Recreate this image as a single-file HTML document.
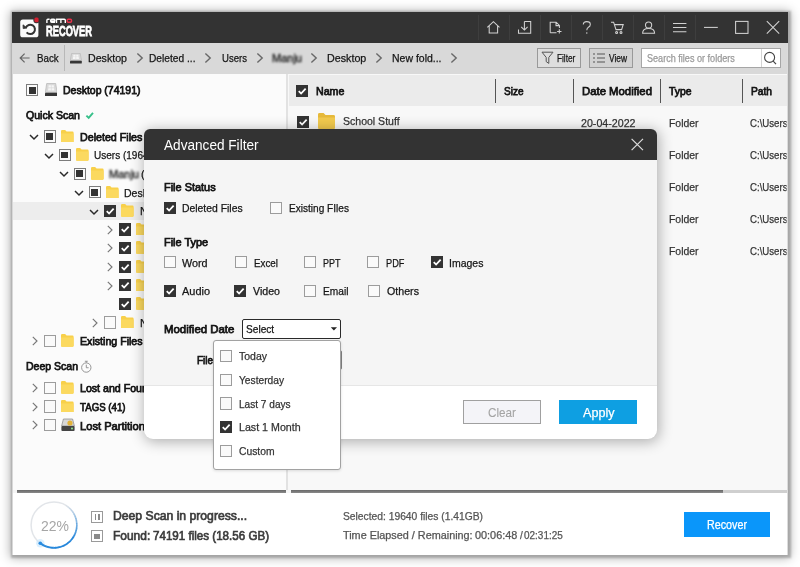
<!DOCTYPE html>
<html><head><meta charset="utf-8"><title>Remo Recover</title>
<style>
*{box-sizing:border-box;margin:0;padding:0}
html,body{width:800px;height:567px;overflow:hidden;background:#fff;font-family:"Liberation Sans",sans-serif;font-size:12px;color:#1a1a1a}
.abs{position:absolute}
.t{position:absolute;white-space:nowrap;-webkit-text-stroke:.25px}
.cb{position:absolute;width:12.3px;height:12.3px;border:1px solid #9c9c9c;background:#fafafa}
.cb.ind::after{content:"";position:absolute;left:1.8px;top:1.8px;width:6.7px;height:6.7px;background:#333}
.cb.chk{background:#333;border-color:#333}
.cb.ind{border-color:#7c7c7c}
.cb.chk svg{position:absolute;left:-1px;top:-1px}
</style></head><body>
<div class="abs" style="left:12.0px;top:12.0px;width:776.0px;height:543.0px;background:#f6f6f6;box-shadow:.7px .7px 2px 2px rgba(140,140,140,.6),0 1px 10px 2px rgba(0,0,0,.3)"></div>
<div class="abs" style="left:12.0px;top:12.0px;width:776.0px;height:30.5px;background:#333"></div>
<div class="abs" style="left:12.0px;top:42.5px;width:776.0px;height:31.0px;background:#d9d9d9"></div>
<div class="abs" style="left:12.0px;top:73.5px;width:275.0px;height:416.5px;background:#fbfbfb"></div>
<div class="abs" style="left:286.4px;top:74.0px;width:1.4px;height:416.0px;background:#e2e2e2"></div>
<div class="abs" style="left:287.8px;top:74.0px;width:1.2px;height:416.0px;background:#f8f8f8"></div>
<div class="abs" style="left:289.0px;top:74.0px;width:499.0px;height:416.0px;background:#f8f8f8"></div>
<div class="abs" style="left:289.0px;top:75.0px;width:499.0px;height:30.5px;background:#ebebeb"></div>
<div class="abs" style="left:12.0px;top:493.0px;width:776.0px;height:62.0px;background:#fff"></div>
<div class="abs" style="left:12.0px;top:42.5px;width:1.0px;height:512.5px;background:#d8d8d8"></div>
<div class="abs" style="left:786.5px;top:42.5px;width:1.5px;height:512.5px;background:#dcdcdc"></div>
<svg class="abs" style="left:14px;top:12px" width="90" height="30" viewBox="14 12 90 30">
<rect x="20.2" y="19.5" width="18.2" height="17.8" rx="2.6" fill="#fbfbfb"/>
<path d="M25.9 27.6 A4.7 4.7 0 1 1 26.6 32.4" fill="none" stroke="#333" stroke-width="2"/>
<path d="M23 24.8 L23.2 28.6 L27 28 Z" fill="#333" stroke="#333" stroke-width=".8"/>
<rect x="33.4" y="16.6" width="6.2" height="6.6" rx="2.4" fill="#333"/>
<rect x="34.4" y="17.5" width="4.2" height="4.8" rx="1.5" fill="#d41f30"/>
<g fill="none" stroke="#fff" stroke-width="1.4">
<path d="M46.9 22.9 V20.2 Q46.9 19.2 47.9 19.2 H49.6"/>
<path d="M55 22.3 H51.7 Q50.7 22.3 50.7 21.3 V20.2 Q50.7 19.2 51.7 19.2 H53.9 Q54.9 19.2 54.9 20.2 V20.9 H50.7"/>
<path d="M56.5 22.9 V19.2 H64.3 Q65.3 19.2 65.3 20.2 V22.9 M60.9 19.2 V22.9"/>
</g>
<rect x="67.2" y="19.2" width="4.3" height="3.1" rx="1" fill="none" stroke="#e8304a" stroke-width="1.45"/>
</svg>
<div class="t" style="left:46.2px;top:21.4px;font-size:15px;line-height:19px;color:#fff;font-weight:bold;transform:scaleX(0.620);transform-origin:0 0;-webkit-text-stroke:.8px #fff;">RECOVER</div>
<svg class="abs" style="left:470px;top:12px" width="320" height="31" viewBox="470 12 320 31">
<g stroke="#3e3e3e" stroke-width="1">
<path d="M478.5 15V40M509.5 15V40M540.5 15V40M571.5 15V40M602.5 15V40M633.5 15V40M664.5 15V40M695.5 15V40"/>
</g>
<g fill="none" stroke="#d2d2d2" stroke-width="1.05">
<path d="M487.3 27.4 L493.4 21.6 L499.5 27.4 M489.2 26 V33 H497.6 V26"/>
<path d="M524.4 21.5 H530.7 V33.3 H518.5 V29.4 M524.4 21.5 V29.6 M521.2 26.8 L524.4 30 L527.6 26.8"/>
<path d="M550.2 32.8 V22.2 H556.2 L559.4 25.4 V28 M556 22.2 V25.6 H559.4 M550.2 32.8 H556.5 M559.3 29.2 V33.6 M557.1 31.4 H561.5"/>
<path d="M583.3 24.6 Q583.3 21.6 586.8 21.6 Q590.3 21.6 590.3 24.4 Q590.3 26.2 588.4 27.2 Q586.8 28.1 586.8 30.2 M586.8 32.2 V33.8"/>
<path d="M611 22.2 H613.6 L616 29.6 H621.6 L623.2 24.6 H614.6"/>
<circle cx="616.6" cy="32.4" r="1"/><circle cx="621" cy="32.4" r="1"/>
<circle cx="648.6" cy="25" r="3.1"/>
<path d="M642.6 33.2 Q642.6 28.4 648.6 28.4 Q654.6 28.4 654.6 33.2 Z"/>
<path d="M673 23.4 H686.4 M673 27.5 H686.4 M673 31.7 H686.4"/>
<path d="M704 27.4 H717.8"/>
<rect x="735.6" y="21.4" width="12.4" height="12"/>
<path d="M766.8 21.2 L779.2 33.6 M779.2 21.2 L766.8 33.6"/>
</g></svg>
<svg class="abs" style="left:18px;top:51px" width="14" height="14" viewBox="18 51 14 14"><path d="M29.6 58 H20.4 M24.6 53.6 L20.2 58 L24.6 62.4" fill="none" stroke="#666" stroke-width="1.2"/></svg>
<div class="t" style="left:36.5px;top:50.5px;font-size:11px;line-height:15px;color:#151515;transform:scaleX(0.887);transform-origin:0 0;">Back</div>
<div class="abs" style="left:64.0px;top:45.0px;width:1.0px;height:26.0px;background:#b8b8b8"></div>
<svg class="abs" style="left:70.3px;top:53.2px" width="11.8" height="10.6" viewBox="0 0 12.4 13.4" preserveAspectRatio="none"><path d="M1.7 .5 H10.7 L12.1 9.6 H.3 Z" fill="#d9d9d9" stroke="#b4b4b4" stroke-width=".7"/><path d="M3.6 2.2 H5.9 V4.6 H3.4 Z M6.5 2.2 H8.8 L9 4.6 H6.5 Z M3.3 5.2 H5.9 V7.6 H3 Z M6.5 5.2 H9.1 L9.4 7.6 H6.5 Z" fill="#f6f6f6"/><rect x="0" y="9.7" width="12.4" height="3.7" rx=".7" fill="#363636"/></svg>
<div class="t" style="left:88.0px;top:50.5px;font-size:11px;line-height:15px;color:#151515;transform:scaleX(0.967);transform-origin:0 0;">Desktop</div>
<div class="t" style="left:149.0px;top:50.5px;font-size:11px;line-height:15px;color:#151515;transform:scaleX(0.927);transform-origin:0 0;">Deleted ...</div>
<div class="t" style="left:221.5px;top:50.5px;font-size:11px;line-height:15px;color:#151515;transform:scaleX(0.870);transform-origin:0 0;">Users</div>
<div class="abs" style="left:272px;top:52px;width:30px;height:12px;filter:blur(1.25px)"><div class="t" style="left:0;top:-2px;font-size:11px;line-height:16px;color:#222;-webkit-text-stroke:.4px #222">Manju</div></div>
<div class="t" style="left:326.8px;top:50.5px;font-size:11px;line-height:15px;color:#151515;transform:scaleX(0.974);transform-origin:0 0;">Desktop</div>
<div class="t" style="left:392.0px;top:50.5px;font-size:11px;line-height:15px;color:#151515;transform:scaleX(0.953);transform-origin:0 0;">New fold...</div>
<svg class="abs" style="left:134.5px;top:52px" width="10" height="12" viewBox="-5 -6 10 12"><path d="M-2.6 -4.4 L2.2 0 L-2.6 4.4" fill="none" stroke="#686868" stroke-width="1.4"/></svg>
<svg class="abs" style="left:202.5px;top:52px" width="10" height="12" viewBox="-5 -6 10 12"><path d="M-2.6 -4.4 L2.2 0 L-2.6 4.4" fill="none" stroke="#686868" stroke-width="1.4"/></svg>
<svg class="abs" style="left:254.5px;top:52px" width="10" height="12" viewBox="-5 -6 10 12"><path d="M-2.6 -4.4 L2.2 0 L-2.6 4.4" fill="none" stroke="#686868" stroke-width="1.4"/></svg>
<svg class="abs" style="left:309px;top:52px" width="10" height="12" viewBox="-5 -6 10 12"><path d="M-2.6 -4.4 L2.2 0 L-2.6 4.4" fill="none" stroke="#686868" stroke-width="1.4"/></svg>
<svg class="abs" style="left:374px;top:52px" width="10" height="12" viewBox="-5 -6 10 12"><path d="M-2.6 -4.4 L2.2 0 L-2.6 4.4" fill="none" stroke="#686868" stroke-width="1.4"/></svg>
<svg class="abs" style="left:449px;top:52px" width="10" height="12" viewBox="-5 -6 10 12"><path d="M-2.6 -4.4 L2.2 0 L-2.6 4.4" fill="none" stroke="#686868" stroke-width="1.4"/></svg>
<div class="abs" style="left:537.0px;top:47.5px;width:44.0px;height:20.5px;background:#dedede;border:1px solid #999"></div>
<svg class="abs" style="left:541px;top:51px" width="14" height="14" viewBox="0 0 14 14"><path d="M1 1.2 H12 L7.8 6.4 V12.4 L5.2 10.6 V6.4 Z" fill="none" stroke="#555" stroke-width="1"/></svg>
<div class="t" style="left:557.3px;top:51.8px;font-size:10px;line-height:14px;color:#151515;transform:scaleX(0.824);transform-origin:0 0;">Filter</div>
<div class="abs" style="left:588.5px;top:47.5px;width:44.0px;height:20.5px;background:#d2d2d2;border:1px solid #999"></div>
<svg class="abs" style="left:592px;top:51px" width="14" height="14" viewBox="0 0 14 14"><path d="M1 3 H3 M5 3 H13 M1 7 H3 M5 7 H13 M1 11 H3 M5 11 H13" fill="none" stroke="#555" stroke-width="1.1"/></svg>
<div class="t" style="left:609.3px;top:51.8px;font-size:10px;line-height:14px;color:#151515;transform:scaleX(0.837);transform-origin:0 0;">View</div>
<div class="abs" style="left:641.0px;top:47.5px;width:139.8px;height:20.5px;background:#fff;border:1px solid #a6a6a6"></div>
<div class="abs" style="left:760.5px;top:48.5px;width:1.0px;height:18.5px;background:#d4d4d4"></div>
<div class="t" style="left:646.5px;top:51.8px;font-size:10px;line-height:14px;color:#9a9a9a;transform:scaleX(0.908);transform-origin:0 0;">Search files or folders</div>
<svg class="abs" style="left:762px;top:50px" width="16" height="16" viewBox="0 0 16 16"><circle cx="7.6" cy="7.4" r="5" fill="none" stroke="#444" stroke-width="1.1"/><path d="M11.2 11.2 L14 14.2" stroke="#444" stroke-width="1.2"/></svg>
<div class="cb ind" style="left:26.1px;top:84.2px"></div>
<svg class="abs" style="left:44.5px;top:82.7px" width="12.4" height="13.3" viewBox="0 0 12.4 13.4" preserveAspectRatio="none"><path d="M1.7 .5 H10.7 L12.1 9.6 H.3 Z" fill="#d9d9d9" stroke="#b4b4b4" stroke-width=".7"/><path d="M3.6 2.2 H5.9 V4.6 H3.4 Z M6.5 2.2 H8.8 L9 4.6 H6.5 Z M3.3 5.2 H5.9 V7.6 H3 Z M6.5 5.2 H9.1 L9.4 7.6 H6.5 Z" fill="#f6f6f6"/><rect x="0" y="9.7" width="12.4" height="3.7" rx=".7" fill="#363636"/></svg>
<div class="t" style="left:62.5px;top:83.0px;font-size:11px;line-height:15px;color:#151515;-webkit-text-stroke:.75px #151515;transform:scaleX(0.953);transform-origin:0 0;">Desktop (74191)</div>
<div class="t" style="left:25.5px;top:107.5px;font-size:11px;line-height:15px;color:#151515;-webkit-text-stroke:.75px #151515;transform:scaleX(0.960);transform-origin:0 0;">Quick Scan</div>
<svg class="abs" style="left:84.6px;top:110.6px" width="11" height="11" viewBox="0 0 11 11"><path d="M1.4 4.6 L3.7 6.9 L8 1.9" fill="none" stroke="#37c08a" stroke-width="1.9"/></svg>
<div class="abs" style="left:13.0px;top:201.6px;width:274.0px;height:18.8px;background:#ededed"></div>
<svg class="abs" style="left:28.0px;top:131.2px" width="12" height="12" viewBox="-6 -6 12 12"><path d="M-4 -2 L0 2 L4 -2" fill="none" stroke="#2a2a2a" stroke-width="1.45"/></svg>
<div class="cb ind" style="left:43.6px;top:130.4px"></div>
<svg class="abs" style="left:61.2px;top:129.7px" width="12.6" height="12.8" viewBox="0 0 14 13" preserveAspectRatio="none"><path d="M0 1.2 Q0 0 1.2 0 H4.6 L6.2 1.6 H12.8 Q14 1.6 14 2.8 V11.8 Q14 13 12.8 13 H1.2 Q0 13 0 11.8 Z" fill="#f8d04a"/><path d="M0 3.6 H14 V11.8 Q14 13 12.8 13 H1.2 Q0 13 0 11.8 Z" fill="#fbd95f"/></svg>
<div class="t" style="left:79.7px;top:129.7px;font-size:11px;line-height:15px;color:#151515;-webkit-text-stroke:.75px #151515;transform:scaleX(0.971);transform-origin:0 0;">Deleted Files (19640)</div>
<svg class="abs" style="left:43.0px;top:149.8px" width="12" height="12" viewBox="-6 -6 12 12"><path d="M-4 -2 L0 2 L4 -2" fill="none" stroke="#2a2a2a" stroke-width="1.45"/></svg>
<div class="cb ind" style="left:58.6px;top:149.0px"></div>
<svg class="abs" style="left:76.2px;top:148.3px" width="12.6" height="12.8" viewBox="0 0 14 13" preserveAspectRatio="none"><path d="M0 1.2 Q0 0 1.2 0 H4.6 L6.2 1.6 H12.8 Q14 1.6 14 2.8 V11.8 Q14 13 12.8 13 H1.2 Q0 13 0 11.8 Z" fill="#f8d04a"/><path d="M0 3.6 H14 V11.8 Q14 13 12.8 13 H1.2 Q0 13 0 11.8 Z" fill="#fbd95f"/></svg>
<div class="t" style="left:94.4px;top:148.3px;font-size:11px;line-height:15px;color:#151515;transform:scaleX(0.911);transform-origin:0 0;">Users (19640)</div>
<svg class="abs" style="left:58.0px;top:168.4px" width="12" height="12" viewBox="-6 -6 12 12"><path d="M-4 -2 L0 2 L4 -2" fill="none" stroke="#2a2a2a" stroke-width="1.45"/></svg>
<div class="cb ind" style="left:73.6px;top:167.6px"></div>
<svg class="abs" style="left:91.2px;top:166.9px" width="12.6" height="12.8" viewBox="0 0 14 13" preserveAspectRatio="none"><path d="M0 1.2 Q0 0 1.2 0 H4.6 L6.2 1.6 H12.8 Q14 1.6 14 2.8 V11.8 Q14 13 12.8 13 H1.2 Q0 13 0 11.8 Z" fill="#f8d04a"/><path d="M0 3.6 H14 V11.8 Q14 13 12.8 13 H1.2 Q0 13 0 11.8 Z" fill="#fbd95f"/></svg>
<div class="abs" style="left:109px;top:166.9px;width:40px;height:14px;filter:blur(1.2px)"><div class="t" style="left:0;top:-1px;font-size:11px;line-height:16px;color:#222;-webkit-text-stroke:.4px #222">Manju</div></div>
<div class="t" style="left:141.0px;top:166.7px;font-size:11px;line-height:15px;color:#151515;transform:scaleX(0.996);transform-origin:0 0;">(</div>
<svg class="abs" style="left:73.0px;top:187.0px" width="12" height="12" viewBox="-6 -6 12 12"><path d="M-4 -2 L0 2 L4 -2" fill="none" stroke="#2a2a2a" stroke-width="1.45"/></svg>
<div class="cb ind" style="left:88.6px;top:186.2px"></div>
<svg class="abs" style="left:106.2px;top:185.5px" width="12.6" height="12.8" viewBox="0 0 14 13" preserveAspectRatio="none"><path d="M0 1.2 Q0 0 1.2 0 H4.6 L6.2 1.6 H12.8 Q14 1.6 14 2.8 V11.8 Q14 13 12.8 13 H1.2 Q0 13 0 11.8 Z" fill="#f8d04a"/><path d="M0 3.6 H14 V11.8 Q14 13 12.8 13 H1.2 Q0 13 0 11.8 Z" fill="#fbd95f"/></svg>
<div class="t" style="left:123.5px;top:185.5px;font-size:11px;line-height:15px;color:#151515;transform:scaleX(0.958);transform-origin:0 0;">Desktop (19640)</div>
<svg class="abs" style="left:88.0px;top:205.6px" width="12" height="12" viewBox="-6 -6 12 12"><path d="M-4 -2 L0 2 L4 -2" fill="none" stroke="#2a2a2a" stroke-width="1.45"/></svg>
<div class="cb chk" style="left:103.6px;top:204.8px"><svg width="12.3" height="12.3" viewBox="0 0 13 13"><path d="M2.9 6.5 L5.4 9 L10.2 3.9" fill="none" stroke="#fff" stroke-width="1.9"/></svg></div>
<svg class="abs" style="left:121.2px;top:204.1px" width="12.6" height="12.8" viewBox="0 0 14 13" preserveAspectRatio="none"><path d="M0 1.2 Q0 0 1.2 0 H4.6 L6.2 1.6 H12.8 Q14 1.6 14 2.8 V11.8 Q14 13 12.8 13 H1.2 Q0 13 0 11.8 Z" fill="#f8d04a"/><path d="M0 3.6 H14 V11.8 Q14 13 12.8 13 H1.2 Q0 13 0 11.8 Z" fill="#fbd95f"/></svg>
<div class="t" style="left:139.7px;top:204.1px;font-size:11px;line-height:15px;color:#151515;transform:scaleX(0.996);transform-origin:0 0;">New folder (19640)</div>
<svg class="abs" style="left:104.2px;top:223.7px" width="12" height="12" viewBox="-6 -6 12 12"><path d="M-2.2 -4.2 L2 0 L-2.2 4.2" fill="none" stroke="#777" stroke-width="1.15"/></svg>
<div class="cb chk" style="left:118.6px;top:223.4px"><svg width="12.3" height="12.3" viewBox="0 0 13 13"><path d="M2.9 6.5 L5.4 9 L10.2 3.9" fill="none" stroke="#fff" stroke-width="1.9"/></svg></div>
<svg class="abs" style="left:136.2px;top:222.7px" width="12.6" height="12.8" viewBox="0 0 14 13" preserveAspectRatio="none"><path d="M0 1.2 Q0 0 1.2 0 H4.6 L6.2 1.6 H12.8 Q14 1.6 14 2.8 V11.8 Q14 13 12.8 13 H1.2 Q0 13 0 11.8 Z" fill="#f8d04a"/><path d="M0 3.6 H14 V11.8 Q14 13 12.8 13 H1.2 Q0 13 0 11.8 Z" fill="#fbd95f"/></svg>
<svg class="abs" style="left:104.2px;top:242.3px" width="12" height="12" viewBox="-6 -6 12 12"><path d="M-2.2 -4.2 L2 0 L-2.2 4.2" fill="none" stroke="#777" stroke-width="1.15"/></svg>
<div class="cb chk" style="left:118.6px;top:242.0px"><svg width="12.3" height="12.3" viewBox="0 0 13 13"><path d="M2.9 6.5 L5.4 9 L10.2 3.9" fill="none" stroke="#fff" stroke-width="1.9"/></svg></div>
<svg class="abs" style="left:136.2px;top:241.3px" width="12.6" height="12.8" viewBox="0 0 14 13" preserveAspectRatio="none"><path d="M0 1.2 Q0 0 1.2 0 H4.6 L6.2 1.6 H12.8 Q14 1.6 14 2.8 V11.8 Q14 13 12.8 13 H1.2 Q0 13 0 11.8 Z" fill="#f8d04a"/><path d="M0 3.6 H14 V11.8 Q14 13 12.8 13 H1.2 Q0 13 0 11.8 Z" fill="#fbd95f"/></svg>
<svg class="abs" style="left:104.2px;top:260.9px" width="12" height="12" viewBox="-6 -6 12 12"><path d="M-2.2 -4.2 L2 0 L-2.2 4.2" fill="none" stroke="#777" stroke-width="1.15"/></svg>
<div class="cb chk" style="left:118.6px;top:260.6px"><svg width="12.3" height="12.3" viewBox="0 0 13 13"><path d="M2.9 6.5 L5.4 9 L10.2 3.9" fill="none" stroke="#fff" stroke-width="1.9"/></svg></div>
<svg class="abs" style="left:136.2px;top:259.9px" width="12.6" height="12.8" viewBox="0 0 14 13" preserveAspectRatio="none"><path d="M0 1.2 Q0 0 1.2 0 H4.6 L6.2 1.6 H12.8 Q14 1.6 14 2.8 V11.8 Q14 13 12.8 13 H1.2 Q0 13 0 11.8 Z" fill="#f8d04a"/><path d="M0 3.6 H14 V11.8 Q14 13 12.8 13 H1.2 Q0 13 0 11.8 Z" fill="#fbd95f"/></svg>
<svg class="abs" style="left:104.2px;top:279.5px" width="12" height="12" viewBox="-6 -6 12 12"><path d="M-2.2 -4.2 L2 0 L-2.2 4.2" fill="none" stroke="#777" stroke-width="1.15"/></svg>
<div class="cb chk" style="left:118.6px;top:279.2px"><svg width="12.3" height="12.3" viewBox="0 0 13 13"><path d="M2.9 6.5 L5.4 9 L10.2 3.9" fill="none" stroke="#fff" stroke-width="1.9"/></svg></div>
<svg class="abs" style="left:136.2px;top:278.5px" width="12.6" height="12.8" viewBox="0 0 14 13" preserveAspectRatio="none"><path d="M0 1.2 Q0 0 1.2 0 H4.6 L6.2 1.6 H12.8 Q14 1.6 14 2.8 V11.8 Q14 13 12.8 13 H1.2 Q0 13 0 11.8 Z" fill="#f8d04a"/><path d="M0 3.6 H14 V11.8 Q14 13 12.8 13 H1.2 Q0 13 0 11.8 Z" fill="#fbd95f"/></svg>
<div class="cb chk" style="left:118.6px;top:297.8px"><svg width="12.3" height="12.3" viewBox="0 0 13 13"><path d="M2.9 6.5 L5.4 9 L10.2 3.9" fill="none" stroke="#fff" stroke-width="1.9"/></svg></div>
<svg class="abs" style="left:136.2px;top:297.1px" width="12.6" height="12.8" viewBox="0 0 14 13" preserveAspectRatio="none"><path d="M0 1.2 Q0 0 1.2 0 H4.6 L6.2 1.6 H12.8 Q14 1.6 14 2.8 V11.8 Q14 13 12.8 13 H1.2 Q0 13 0 11.8 Z" fill="#f8d04a"/><path d="M0 3.6 H14 V11.8 Q14 13 12.8 13 H1.2 Q0 13 0 11.8 Z" fill="#fbd95f"/></svg>
<svg class="abs" style="left:89.2px;top:316.7px" width="12" height="12" viewBox="-6 -6 12 12"><path d="M-2.2 -4.2 L2 0 L-2.2 4.2" fill="none" stroke="#777" stroke-width="1.15"/></svg>
<div class="cb " style="left:103.6px;top:316.4px"></div>
<svg class="abs" style="left:121.2px;top:315.7px" width="12.6" height="12.8" viewBox="0 0 14 13" preserveAspectRatio="none"><path d="M0 1.2 Q0 0 1.2 0 H4.6 L6.2 1.6 H12.8 Q14 1.6 14 2.8 V11.8 Q14 13 12.8 13 H1.2 Q0 13 0 11.8 Z" fill="#f8d04a"/><path d="M0 3.6 H14 V11.8 Q14 13 12.8 13 H1.2 Q0 13 0 11.8 Z" fill="#fbd95f"/></svg>
<div class="t" style="left:139.7px;top:315.7px;font-size:11px;line-height:15px;color:#151515;transform:scaleX(0.996);transform-origin:0 0;">New folder (2)</div>
<svg class="abs" style="left:29.2px;top:335.3px" width="12" height="12" viewBox="-6 -6 12 12"><path d="M-2.2 -4.2 L2 0 L-2.2 4.2" fill="none" stroke="#777" stroke-width="1.15"/></svg>
<div class="cb " style="left:43.6px;top:335.0px"></div>
<svg class="abs" style="left:61.2px;top:334.3px" width="12.6" height="12.8" viewBox="0 0 14 13" preserveAspectRatio="none"><path d="M0 1.2 Q0 0 1.2 0 H4.6 L6.2 1.6 H12.8 Q14 1.6 14 2.8 V11.8 Q14 13 12.8 13 H1.2 Q0 13 0 11.8 Z" fill="#f8d04a"/><path d="M0 3.6 H14 V11.8 Q14 13 12.8 13 H1.2 Q0 13 0 11.8 Z" fill="#fbd95f"/></svg>
<div class="t" style="left:79.7px;top:334.3px;font-size:11px;line-height:15px;color:#151515;-webkit-text-stroke:.75px #151515;transform:scaleX(0.966);transform-origin:0 0;">Existing Files (54551)</div>
<div class="t" style="left:25.5px;top:358.5px;font-size:11px;line-height:15px;color:#151515;-webkit-text-stroke:.75px #151515;transform:scaleX(0.955);transform-origin:0 0;">Deep Scan</div>
<svg class="abs" style="left:80px;top:359.6px" width="12.6" height="13.5" viewBox="0 0 14 15"><circle cx="7" cy="8.4" r="5.2" fill="none" stroke="#8a8a8a" stroke-width="1"/><path d="M7 5.2 V8.6 H9.6 M5.4 1.4 H8.6 M7 1.4 V3" fill="none" stroke="#8a8a8a" stroke-width="1"/></svg>
<svg class="abs" style="left:29.2px;top:382.0px" width="12" height="12" viewBox="-6 -6 12 12"><path d="M-2.2 -4.2 L2 0 L-2.2 4.2" fill="none" stroke="#777" stroke-width="1.15"/></svg>
<div class="cb " style="left:43.6px;top:381.7px"></div>
<svg class="abs" style="left:61.2px;top:381.0px" width="12.6" height="12.8" viewBox="0 0 14 13" preserveAspectRatio="none"><path d="M0 1.2 Q0 0 1.2 0 H4.6 L6.2 1.6 H12.8 Q14 1.6 14 2.8 V11.8 Q14 13 12.8 13 H1.2 Q0 13 0 11.8 Z" fill="#f8d04a"/><path d="M0 3.6 H14 V11.8 Q14 13 12.8 13 H1.2 Q0 13 0 11.8 Z" fill="#fbd95f"/></svg>
<div class="t" style="left:80.0px;top:381.4px;font-size:11px;line-height:15px;color:#151515;-webkit-text-stroke:.75px #151515;transform:scaleX(0.965);transform-origin:0 0;">Lost and Found (0)</div>
<svg class="abs" style="left:29.2px;top:400.7px" width="12" height="12" viewBox="-6 -6 12 12"><path d="M-2.2 -4.2 L2 0 L-2.2 4.2" fill="none" stroke="#777" stroke-width="1.15"/></svg>
<div class="cb " style="left:43.6px;top:400.4px"></div>
<svg class="abs" style="left:61.2px;top:399.7px" width="12.6" height="12.8" viewBox="0 0 14 13" preserveAspectRatio="none"><path d="M0 1.2 Q0 0 1.2 0 H4.6 L6.2 1.6 H12.8 Q14 1.6 14 2.8 V11.8 Q14 13 12.8 13 H1.2 Q0 13 0 11.8 Z" fill="#f8d04a"/><path d="M0 3.6 H14 V11.8 Q14 13 12.8 13 H1.2 Q0 13 0 11.8 Z" fill="#fbd95f"/></svg>
<div class="t" style="left:80.0px;top:400.1px;font-size:11px;line-height:15px;color:#151515;-webkit-text-stroke:.75px #151515;transform:scaleX(0.879);transform-origin:0 0;">TAGS (41)</div>
<svg class="abs" style="left:29.2px;top:419.2px" width="12" height="12" viewBox="-6 -6 12 12"><path d="M-2.2 -4.2 L2 0 L-2.2 4.2" fill="none" stroke="#777" stroke-width="1.15"/></svg>
<div class="cb " style="left:43.6px;top:418.9px"></div>
<svg class="abs" style="left:61px;top:418.2px" width="14" height="14" viewBox="0 0 14 14"><path d="M2.4 1 H11.6 L13.4 8 H.6 Z" fill="#d8d8d8" stroke="#888" stroke-width=".7"/><rect x=".4" y="8" width="13.2" height="5" rx="1" fill="#444"/><circle cx="9" cy="5" r="2.6" fill="#e2b33a"/><circle cx="11" cy="10.5" r=".9" fill="#9f9"/></svg>
<div class="t" style="left:80.0px;top:418.6px;font-size:11px;line-height:15px;color:#151515;-webkit-text-stroke:.75px #151515;transform:scaleX(1.012);transform-origin:0 0;">Lost Partitions (0)</div>
<div class="cb chk" style="left:296.1px;top:85.2px"><svg width="12.3" height="12.3" viewBox="0 0 13 13"><path d="M2.9 6.5 L5.4 9 L10.2 3.9" fill="none" stroke="#fff" stroke-width="1.9"/></svg></div>
<div class="t" style="left:315.9px;top:83.5px;font-size:11px;line-height:15px;color:#151515;-webkit-text-stroke:.75px #151515;transform:scaleX(0.965);transform-origin:0 0;">Name</div>
<div class="abs" style="left:495.0px;top:78.6px;width:1.2px;height:24.0px;background:#555"></div>
<div class="abs" style="left:573.0px;top:78.6px;width:1.2px;height:24.0px;background:#555"></div>
<div class="abs" style="left:660.0px;top:78.6px;width:1.2px;height:24.0px;background:#555"></div>
<div class="abs" style="left:742.0px;top:78.6px;width:1.2px;height:24.0px;background:#555"></div>
<div class="t" style="left:503.5px;top:83.5px;font-size:11px;line-height:15px;color:#151515;-webkit-text-stroke:.75px #151515;transform:scaleX(0.911);transform-origin:0 0;">Size</div>
<div class="t" style="left:581.5px;top:83.5px;font-size:11px;line-height:15px;color:#151515;-webkit-text-stroke:.75px #151515;transform:scaleX(1.031);transform-origin:0 0;">Date Modified</div>
<div class="t" style="left:669.0px;top:83.5px;font-size:11px;line-height:15px;color:#151515;-webkit-text-stroke:.75px #151515;transform:scaleX(0.944);transform-origin:0 0;">Type</div>
<div class="t" style="left:750.5px;top:83.5px;font-size:11px;line-height:15px;color:#151515;-webkit-text-stroke:.75px #151515;transform:scaleX(0.928);transform-origin:0 0;">Path</div>
<div class="cb chk" style="left:297.0px;top:115.9px"><svg width="12.3" height="12.3" viewBox="0 0 13 13"><path d="M2.9 6.5 L5.4 9 L10.2 3.9" fill="none" stroke="#fff" stroke-width="1.9"/></svg></div>
<svg class="abs" style="left:317.8px;top:113.2px" width="17" height="16" viewBox="0 0 14 13" preserveAspectRatio="none"><path d="M0 1.2 Q0 0 1.2 0 H4.6 L6.2 1.6 H12.8 Q14 1.6 14 2.8 V11.8 Q14 13 12.8 13 H1.2 Q0 13 0 11.8 Z" fill="#e6b93a"/><path d="M0 3.6 H14 V11.8 Q14 13 12.8 13 H1.2 Q0 13 0 11.8 Z" fill="#f3cb4e"/></svg>
<div class="t" style="left:342.6px;top:114.0px;font-size:11px;line-height:15px;color:#333;transform:scaleX(0.957);transform-origin:0 0;">School Stuff</div>
<div class="t" style="left:581.0px;top:115.8px;font-size:11px;line-height:15px;color:#333;transform:scaleX(0.969);transform-origin:0 0;">20-04-2022</div>
<div class="t" style="left:669.0px;top:115.8px;font-size:11px;line-height:15px;color:#333;transform:scaleX(0.946);transform-origin:0 0;">Folder</div>
<div class="t" style="left:750.0px;top:115.8px;font-size:11px;line-height:15px;color:#333;transform:scaleX(0.877);transform-origin:0 0;clip-path:inset(0 calc(100% - 41.8px) 0 0);">C:\Users\M</div>
<div class="t" style="left:669.0px;top:147.8px;font-size:11px;line-height:15px;color:#333;transform:scaleX(0.946);transform-origin:0 0;">Folder</div>
<div class="t" style="left:750.0px;top:147.8px;font-size:11px;line-height:15px;color:#333;transform:scaleX(0.877);transform-origin:0 0;clip-path:inset(0 calc(100% - 41.8px) 0 0);">C:\Users\M</div>
<div class="t" style="left:669.0px;top:179.8px;font-size:11px;line-height:15px;color:#333;transform:scaleX(0.946);transform-origin:0 0;">Folder</div>
<div class="t" style="left:750.0px;top:179.8px;font-size:11px;line-height:15px;color:#333;transform:scaleX(0.877);transform-origin:0 0;clip-path:inset(0 calc(100% - 41.8px) 0 0);">C:\Users\M</div>
<div class="t" style="left:669.0px;top:211.8px;font-size:11px;line-height:15px;color:#333;transform:scaleX(0.946);transform-origin:0 0;">Folder</div>
<div class="t" style="left:750.0px;top:211.8px;font-size:11px;line-height:15px;color:#333;transform:scaleX(0.877);transform-origin:0 0;clip-path:inset(0 calc(100% - 41.8px) 0 0);">C:\Users\M</div>
<div class="t" style="left:669.0px;top:243.8px;font-size:11px;line-height:15px;color:#333;transform:scaleX(0.946);transform-origin:0 0;">Folder</div>
<div class="t" style="left:750.0px;top:243.8px;font-size:11px;line-height:15px;color:#333;transform:scaleX(0.877);transform-origin:0 0;clip-path:inset(0 calc(100% - 41.8px) 0 0);">C:\Users\M</div>
<div class="abs" style="left:17.0px;top:489.5px;width:268.8px;height:3.4px;background:linear-gradient(#686868,#8a8a8a)"></div>
<div class="abs" style="left:290.6px;top:489.5px;width:432.4px;height:3.4px;background:linear-gradient(#686868,#8a8a8a)"></div>
<div class="abs" style="left:723.0px;top:489.5px;width:64.0px;height:3.4px;background:#cfcfcf"></div>
<svg class="abs" style="left:26px;top:496.6px" width="56" height="56" viewBox="-28 -28 56 56">
<circle r="22.9" fill="none" stroke="#e2e5e9" stroke-width="1.5"/>
<circle cx="-13.72" cy="18.21" r="4.2" fill="#bfe1fb" fill-opacity=".55"/>
<path d="M9.64 -20.66 A22.8 22.8 0 0 1 12.01 -19.38" stroke="#2487dc" stroke-opacity="0.00" stroke-width="1.41" fill="none"/><path d="M11.74 -19.54 A22.8 22.8 0 0 1 13.97 -18.02" stroke="#2487dc" stroke-opacity="0.03" stroke-width="1.43" fill="none"/><path d="M13.72 -18.21 A22.8 22.8 0 0 1 15.78 -16.46" stroke="#2487dc" stroke-opacity="0.08" stroke-width="1.44" fill="none"/><path d="M15.55 -16.67 A22.8 22.8 0 0 1 17.41 -14.72" stroke="#2487dc" stroke-opacity="0.13" stroke-width="1.46" fill="none"/><path d="M17.21 -14.96 A22.8 22.8 0 0 1 18.86 -12.82" stroke="#2487dc" stroke-opacity="0.18" stroke-width="1.48" fill="none"/><path d="M18.68 -13.08 A22.8 22.8 0 0 1 20.09 -10.77" stroke="#2487dc" stroke-opacity="0.24" stroke-width="1.49" fill="none"/><path d="M19.94 -11.05 A22.8 22.8 0 0 1 21.11 -8.61" stroke="#2487dc" stroke-opacity="0.30" stroke-width="1.51" fill="none"/><path d="M20.99 -8.91 A22.8 22.8 0 0 1 21.89 -6.36" stroke="#2487dc" stroke-opacity="0.36" stroke-width="1.53" fill="none"/><path d="M21.80 -6.67 A22.8 22.8 0 0 1 22.44 -4.04" stroke="#2487dc" stroke-opacity="0.43" stroke-width="1.55" fill="none"/><path d="M22.38 -4.35 A22.8 22.8 0 0 1 22.74 -1.67" stroke="#2487dc" stroke-opacity="0.49" stroke-width="1.56" fill="none"/><path d="M22.71 -1.99 A22.8 22.8 0 0 1 22.79 0.72" stroke="#2487dc" stroke-opacity="0.56" stroke-width="1.58" fill="none"/><path d="M22.80 0.40 A22.8 22.8 0 0 1 22.59 3.09" stroke="#2487dc" stroke-opacity="0.63" stroke-width="1.60" fill="none"/><path d="M22.63 2.78 A22.8 22.8 0 0 1 22.14 5.44" stroke="#2487dc" stroke-opacity="0.70" stroke-width="1.61" fill="none"/><path d="M22.22 5.13 A22.8 22.8 0 0 1 21.45 7.72" stroke="#2487dc" stroke-opacity="0.77" stroke-width="1.63" fill="none"/><path d="M21.56 7.42 A22.8 22.8 0 0 1 20.53 9.92" stroke="#2487dc" stroke-opacity="0.84" stroke-width="1.65" fill="none"/><path d="M20.66 9.64 A22.8 22.8 0 0 1 19.38 12.01" stroke="#2487dc" stroke-opacity="0.92" stroke-width="1.67" fill="none"/><path d="M19.54 11.74 A22.8 22.8 0 0 1 18.02 13.97" stroke="#2487dc" stroke-opacity="0.99" stroke-width="1.68" fill="none"/><path d="M18.21 13.72 A22.8 22.8 0 0 1 16.46 15.78" stroke="#2487dc" stroke-opacity="1.00" stroke-width="1.70" fill="none"/><path d="M16.67 15.55 A22.8 22.8 0 0 1 14.72 17.41" stroke="#2487dc" stroke-opacity="1.00" stroke-width="1.72" fill="none"/><path d="M14.96 17.21 A22.8 22.8 0 0 1 12.82 18.86" stroke="#2487dc" stroke-opacity="1.00" stroke-width="1.74" fill="none"/><path d="M13.08 18.68 A22.8 22.8 0 0 1 10.77 20.09" stroke="#2487dc" stroke-opacity="1.00" stroke-width="1.75" fill="none"/><path d="M11.05 19.94 A22.8 22.8 0 0 1 8.61 21.11" stroke="#2487dc" stroke-opacity="1.00" stroke-width="1.77" fill="none"/><path d="M8.91 20.99 A22.8 22.8 0 0 1 6.36 21.89" stroke="#2487dc" stroke-opacity="1.00" stroke-width="1.79" fill="none"/><path d="M6.67 21.80 A22.8 22.8 0 0 1 4.04 22.44" stroke="#2487dc" stroke-opacity="1.00" stroke-width="1.80" fill="none"/><path d="M4.35 22.38 A22.8 22.8 0 0 1 1.67 22.74" stroke="#2487dc" stroke-opacity="1.00" stroke-width="1.82" fill="none"/><path d="M1.99 22.71 A22.8 22.8 0 0 1 -0.72 22.79" stroke="#2487dc" stroke-opacity="1.00" stroke-width="1.84" fill="none"/><path d="M-0.40 22.80 A22.8 22.8 0 0 1 -3.09 22.59" stroke="#2487dc" stroke-opacity="1.00" stroke-width="1.86" fill="none"/><path d="M-2.78 22.63 A22.8 22.8 0 0 1 -5.44 22.14" stroke="#2487dc" stroke-opacity="1.00" stroke-width="1.87" fill="none"/><path d="M-5.13 22.22 A22.8 22.8 0 0 1 -7.72 21.45" stroke="#2487dc" stroke-opacity="1.00" stroke-width="1.89" fill="none"/><path d="M-7.42 21.56 A22.8 22.8 0 0 1 -9.92 20.53" stroke="#2487dc" stroke-opacity="1.00" stroke-width="1.91" fill="none"/><path d="M-9.64 20.66 A22.8 22.8 0 0 1 -12.01 19.38" stroke="#2487dc" stroke-opacity="1.00" stroke-width="1.92" fill="none"/><path d="M-11.74 19.54 A22.8 22.8 0 0 1 -13.97 18.02" stroke="#2487dc" stroke-opacity="1.00" stroke-width="1.94" fill="none"/>
<circle cx="-13.72" cy="18.21" r="1.8" fill="#2a8ce0"/>
</svg>
<div class="t" style="left:41.0px;top:516.6px;font-size:14px;line-height:18px;color:#a6a6a6;transform:scaleX(0.996);transform-origin:0 0;-webkit-text-stroke:0;">22%</div>
<div class="abs" style="left:91.0px;top:510.8px;width:12.0px;height:12.0px;border:1px solid #9a9a9a;background:#fff"></div>
<div class="abs" style="left:94.7px;top:513.8px;width:1.7px;height:6.0px;background:#8a8a8a"></div>
<div class="abs" style="left:97.9px;top:513.8px;width:1.7px;height:6.0px;background:#8a8a8a"></div>
<div class="abs" style="left:91.0px;top:530.3px;width:12.0px;height:12.0px;border:1px solid #9a9a9a;background:#fff"></div>
<div class="abs" style="left:94.2px;top:533.5px;width:5.6px;height:5.6px;background:#8a8a8a"></div>
<div class="t" style="left:112.5px;top:508.0px;font-size:12px;line-height:16px;color:#3c3c3c;transform:scaleX(1.015);transform-origin:0 0;-webkit-text-stroke:.65px #3c3c3c;">Deep Scan in progress...</div>
<div class="t" style="left:112.5px;top:528.0px;font-size:12px;line-height:16px;color:#3c3c3c;transform:scaleX(0.996);transform-origin:0 0;-webkit-text-stroke:.65px #3c3c3c;">Found:</div>
<div class="t" style="left:153.0px;top:528.0px;font-size:12px;line-height:16px;color:#3c3c3c;transform:scaleX(0.966);transform-origin:0 0;-webkit-text-stroke:.65px #3c3c3c;">74191 files (18.56 GB)</div>
<div class="t" style="left:343.0px;top:510.1px;font-size:10px;line-height:14px;color:#555;transform:scaleX(1.028);transform-origin:0 0;">Selected: 19640 files (1.41GB)</div>
<div class="t" style="left:343.0px;top:528.9px;font-size:10px;line-height:14px;color:#555;transform:scaleX(1.083);transform-origin:0 0;">Time Elapsed / Remaining:</div>
<div class="t" style="left:474.7px;top:528.9px;font-size:10px;line-height:14px;color:#555;transform:scaleX(1.087);transform-origin:0 0;">00:06:48</div>
<div class="t" style="left:519.6px;top:528.9px;font-size:10px;line-height:14px;color:#555;transform:scaleX(0.996);transform-origin:0 0;">/</div>
<div class="t" style="left:524.4px;top:528.9px;font-size:10px;line-height:14px;color:#555;transform:scaleX(0.996);transform-origin:0 0;">02:31:25</div>
<div class="abs" style="left:684.3px;top:512.0px;width:85.5px;height:24.5px;background:#0a96fa"></div>
<div class="t" style="left:707.0px;top:517.2px;font-size:12px;line-height:16px;color:#fff;transform:scaleX(0.895);transform-origin:0 0;">Recover</div>
<div class="abs" style="left:144.2px;top:129.0px;width:512.8px;height:310.0px;background:#fff;border-radius:6px 6px 9px 9px;box-shadow:1px 2px 14px 1px rgba(0,0,0,.30)"></div>
<div class="abs" style="left:144.2px;top:129.0px;width:512.8px;height:30.5px;background:#333;border-radius:6px 6px 0 0"></div>
<div class="abs" style="left:144.2px;top:159.5px;width:512.8px;height:226.0px;background:#f5f5f5"></div>
<div class="abs" style="left:144.2px;top:385.0px;width:512.8px;height:1.0px;background:#e6e6e6"></div>
<div class="t" style="left:164.4px;top:135.6px;font-size:14px;line-height:18px;color:#fff;transform:scaleX(0.972);transform-origin:0 0;-webkit-text-stroke:0;">Advanced Filter</div>
<svg class="abs" style="left:630px;top:137px" width="15" height="15" viewBox="0 0 15 15"><path d="M1.6 1.8 L13 13.2 M13 1.8 L1.6 13.2" stroke="#ddd" stroke-width="1.2" fill="none"/></svg>
<div class="t" style="left:164.4px;top:180.0px;font-size:11px;line-height:15px;color:#151515;-webkit-text-stroke:.75px #151515;transform:scaleX(0.993);transform-origin:0 0;">File Status</div>
<div class="cb chk" style="left:163.9px;top:202.2px"><svg width="12.3" height="12.3" viewBox="0 0 13 13"><path d="M2.9 6.5 L5.4 9 L10.2 3.9" fill="none" stroke="#fff" stroke-width="1.9"/></svg></div>
<div class="t" style="left:182.4px;top:201.3px;font-size:11px;line-height:15px;color:#151515;transform:scaleX(0.944);transform-origin:0 0;">Deleted Files</div>
<div class="cb " style="left:270.1px;top:202.2px"></div>
<div class="t" style="left:289.0px;top:201.3px;font-size:11px;line-height:15px;color:#151515;transform:scaleX(0.917);transform-origin:0 0;">Existing FIles</div>
<div class="t" style="left:164.4px;top:234.5px;font-size:11px;line-height:15px;color:#151515;-webkit-text-stroke:.75px #151515;transform:scaleX(0.995);transform-origin:0 0;">File Type</div>
<div class="cb " style="left:163.9px;top:256.2px"></div>
<div class="t" style="left:182.4px;top:255.7px;font-size:11px;line-height:15px;color:#151515;transform:scaleX(0.982);transform-origin:0 0;">Word</div>
<div class="cb " style="left:235.1px;top:256.2px"></div>
<div class="t" style="left:253.6px;top:255.7px;font-size:11px;line-height:15px;color:#151515;transform:scaleX(0.892);transform-origin:0 0;">Excel</div>
<div class="cb " style="left:304.1px;top:256.2px"></div>
<div class="t" style="left:322.6px;top:255.7px;font-size:11px;line-height:15px;color:#151515;transform:scaleX(0.813);transform-origin:0 0;">PPT</div>
<div class="cb " style="left:367.1px;top:256.2px"></div>
<div class="t" style="left:385.6px;top:255.7px;font-size:11px;line-height:15px;color:#151515;transform:scaleX(0.836);transform-origin:0 0;">PDF</div>
<div class="cb chk" style="left:431.1px;top:256.2px"><svg width="12.3" height="12.3" viewBox="0 0 13 13"><path d="M2.9 6.5 L5.4 9 L10.2 3.9" fill="none" stroke="#fff" stroke-width="1.9"/></svg></div>
<div class="t" style="left:448.8px;top:255.7px;font-size:11px;line-height:15px;color:#151515;transform:scaleX(0.954);transform-origin:0 0;">Images</div>
<div class="cb chk" style="left:163.9px;top:284.7px"><svg width="12.3" height="12.3" viewBox="0 0 13 13"><path d="M2.9 6.5 L5.4 9 L10.2 3.9" fill="none" stroke="#fff" stroke-width="1.9"/></svg></div>
<div class="t" style="left:182.4px;top:283.8px;font-size:11px;line-height:15px;color:#151515;transform:scaleX(0.995);transform-origin:0 0;">Audio</div>
<div class="cb chk" style="left:234.1px;top:284.7px"><svg width="12.3" height="12.3" viewBox="0 0 13 13"><path d="M2.9 6.5 L5.4 9 L10.2 3.9" fill="none" stroke="#fff" stroke-width="1.9"/></svg></div>
<div class="t" style="left:253.0px;top:283.8px;font-size:11px;line-height:15px;color:#151515;transform:scaleX(0.967);transform-origin:0 0;">Video</div>
<div class="cb " style="left:304.1px;top:284.7px"></div>
<div class="t" style="left:322.6px;top:283.8px;font-size:11px;line-height:15px;color:#151515;transform:scaleX(0.923);transform-origin:0 0;">Email</div>
<div class="cb " style="left:367.6px;top:284.7px"></div>
<div class="t" style="left:386.7px;top:283.8px;font-size:11px;line-height:15px;color:#151515;transform:scaleX(0.969);transform-origin:0 0;">Others</div>
<div class="t" style="left:164.4px;top:321.8px;font-size:11px;line-height:15px;color:#151515;-webkit-text-stroke:.75px #151515;transform:scaleX(1.036);transform-origin:0 0;">Modified Date</div>
<div class="abs" style="left:242.0px;top:318.6px;width:98.8px;height:20.0px;background:#fff;border:1px solid #2a2a2a;border-radius:2px"></div>
<div class="t" style="left:245.7px;top:322.0px;font-size:11px;line-height:15px;color:#151515;transform:scaleX(0.922);transform-origin:0 0;">Select</div>
<svg class="abs" style="left:329px;top:325px" width="10" height="7" viewBox="0 0 10 7"><path d="M1.8 2.2 H8 L4.9 5.6 Z" fill="#222"/></svg>
<div class="t" style="left:197.0px;top:352.5px;font-size:11px;line-height:15px;color:#151515;-webkit-text-stroke:.75px #151515;transform:scaleX(0.903);transform-origin:0 0;">File</div>
<div class="abs" style="left:242.0px;top:349.5px;width:100.0px;height:20.0px;background:#fff;border:1px solid #808080;border-radius:2px"></div>
<div class="abs" style="left:463.0px;top:399.5px;width:78.0px;height:24.5px;background:#f4f4f8;border:1px solid #a0a0a0"></div>
<div class="t" style="left:488.0px;top:403.5px;font-size:13px;line-height:17px;color:#a4a4a4;transform:scaleX(0.901);transform-origin:0 0;-webkit-text-stroke:.1px;">Clear</div>
<div class="abs" style="left:559.4px;top:399.5px;width:77.6px;height:24.5px;background:#0e9fe2"></div>
<div class="t" style="left:582.5px;top:403.5px;font-size:13px;line-height:17px;color:#fff;transform:scaleX(0.969);transform-origin:0 0;">Apply</div>
<div class="abs" style="left:213.3px;top:339.9px;width:127.4px;height:129.8px;background:#fff;border:1px solid #a2a2a2;border-radius:3px;box-shadow:0 1px 3px rgba(0,0,0,.12)"></div>
<div class="cb " style="left:220.2px;top:349.9px"></div>
<div class="t" style="left:239.4px;top:349.0px;font-size:11px;line-height:15px;color:#333;transform:scaleX(0.954);transform-origin:0 0;">Today</div>
<div class="cb " style="left:220.2px;top:373.7px"></div>
<div class="t" style="left:239.4px;top:372.8px;font-size:11px;line-height:15px;color:#333;transform:scaleX(0.928);transform-origin:0 0;">Yesterday</div>
<div class="cb " style="left:220.2px;top:397.4px"></div>
<div class="t" style="left:239.4px;top:396.5px;font-size:11px;line-height:15px;color:#333;transform:scaleX(0.917);transform-origin:0 0;">Last 7 days</div>
<div class="cb chk" style="left:220.2px;top:421.2px"><svg width="12.3" height="12.3" viewBox="0 0 13 13"><path d="M2.9 6.5 L5.4 9 L10.2 3.9" fill="none" stroke="#fff" stroke-width="1.9"/></svg></div>
<div class="t" style="left:239.4px;top:420.3px;font-size:11px;line-height:15px;color:#333;transform:scaleX(0.969);transform-origin:0 0;">Last 1 Month</div>
<div class="cb " style="left:220.2px;top:445.2px"></div>
<div class="t" style="left:239.4px;top:444.3px;font-size:11px;line-height:15px;color:#333;transform:scaleX(0.939);transform-origin:0 0;">Custom</div>
</body></html>
